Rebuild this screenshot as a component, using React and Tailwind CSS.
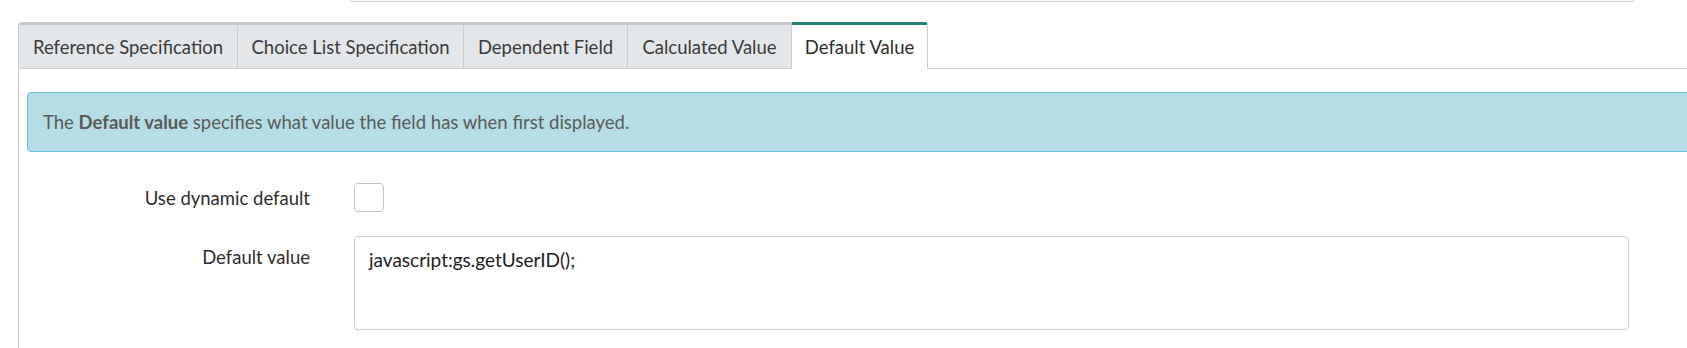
import React from "react";

const tabs = [
  { label: "Reference Specification", w: "w-[219px]" },
  { label: "Choice List Specification", w: "w-[226px]" },
  { label: "Dependent Field", w: "w-[164px]" },
  { label: "Calculated Value", w: "w-[164px]" },
];

export default function App() {
  return (
    <div className="relative w-[1687px] h-[348px] bg-white overflow-hidden font-['Lato','Noto_Sans',sans-serif] text-[18.5px]">
      {/* remnant of a field above */}
      <div className="ml-[350px] w-[1284px] h-[2px] border border-t-0 border-[#cccccc] rounded-b-[4px]" />

      <div className="ml-[18px] mt-[20px] border-l border-[#cccccc] h-[400px] rounded-tl-[4px]">
        {/* tab bar */}
        <div className="flex items-stretch h-[47px]">
          {tabs.map((t, i) => (
            <div
              key={t.label}
              className={`${t.w} box-border h-[47px] pt-[2px] flex items-center justify-center bg-[#e4e7ea] border-t-[3px] border-t-[#c8c8c8] border-b border-b-[#cccccc] border-r border-r-[#cccccc] text-[#3a3a3a] ${i === 0 ? "rounded-tl-[3px]" : ""}`}
            >
              {t.label}
            </div>
          ))}
          <div className="w-[136px] box-border h-[47px] pt-[2px] flex items-center justify-center bg-white border-t-[3px] border-t-[#1f8476] border-r border-r-[#cccccc] rounded-tr-[3px] text-[#2e2e2e]">
            Default Value
          </div>
          <div className="flex-1 border-b border-[#cccccc]" />
        </div>

        {/* content */}
        <div className="pl-[8px] pt-[23px]">
          <div className="w-[1700px] h-[60px] box-border flex items-center pl-[15px] pt-[2px] bg-[#b5dde5] border border-[#64bed4] rounded-[4px] text-[#5a5a5a]">
            <span>
              The <span className="font-bold">Default value</span> specifies what value the field has when first displayed.
            </span>
          </div>

          <div className="mt-[31px] grid grid-cols-[283px_1275px] gap-x-[44px] gap-y-[24px]">
            <div className="flex items-center justify-end h-[29px] pt-[2px] text-[#2e2e2e]">
              Use dynamic default
            </div>
            <div className="flex items-center h-[29px]">
              <div className="w-[30px] h-[29px] box-border border border-[#c5c5c5] rounded-[4px] bg-white" />
            </div>

            <div className="flex justify-end pt-[9px] leading-[24px] text-[#2e2e2e]">
              Default value
            </div>
            <div className="h-[94px] box-border border border-[#cccccc] rounded-[4px] bg-white pl-[14px] pt-[11px] leading-[24px] text-[19px] text-[#222222]">
              javascript:gs.getUserID();
            </div>
          </div>
        </div>
      </div>
    </div>
  );
}
